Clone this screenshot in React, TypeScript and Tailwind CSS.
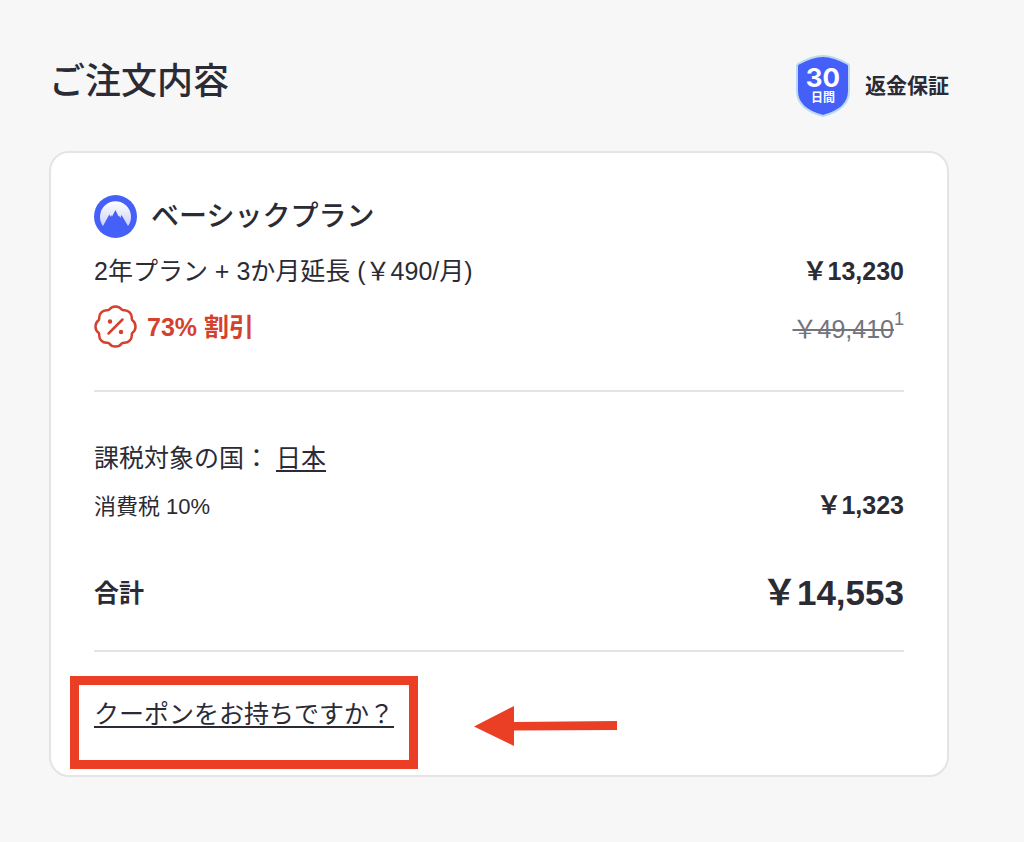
function ShieldBadge() {
  return (
    <div className="relative flex h-16 w-14 flex-col items-center text-white">
      <svg viewBox="0 0 56 64" className="absolute inset-0 h-full w-full" aria-hidden="true">
        <path
          d="M28 2 C35 2 44 5 53 10 Q54 11 54 12 V37 C54 50 43 58 28 62 C13 58 2 50 2 37 V12 Q2 11 3 10 C12 5 21 2 28 2 Z"
          fill="#4560f8"
          stroke="#bdd9f0"
          strokeWidth="2"
        />
      </svg>
      <span className="relative mt-3 font-['Inter',sans-serif] text-[26px] leading-6 font-bold">30</span>
      <span className="relative text-xs leading-4 font-bold">日間</span>
    </div>
  );
}

function MountainLogo() {
  return (
    <svg viewBox="0 0 43 43" className="h-[43px] w-[43px] shrink-0" aria-hidden="true">
      <defs>
        <linearGradient id="snow" x1="0" y1="0" x2="0" y2="1">
          <stop offset="0" stopColor="#ffffff" />
          <stop offset="1" stopColor="#cbd2f8" />
        </linearGradient>
      </defs>
      <circle cx="21.5" cy="21.5" r="21.5" fill="#4560f8" />
      <path
        d="M9 31 A15.500 15.500 0 1 1 34 31 L27.500 20 L26.300 23 L25 20.500 L24.500 21.500 L21.500 15 L18 21.500 L17 20 L16.500 22 L15.300 19.500 Z"
        fill="url(#snow)"
      />
    </svg>
  );
}

function DiscountIcon() {
  return (
    <svg
      viewBox="0 0 43 43"
      className="h-[43px] w-[43px] shrink-0"
      fill="none"
      stroke="#d3422e"
      strokeWidth="2.500"
      strokeLinecap="round"
      strokeLinejoin="round"
      aria-hidden="true"
    >
      <path d="M15 4.800 A8 8 0 0 1 28 4.800 Q29 5.400 30.500 5.200 A7.300 7.300 0 0 1 37.800 12.500 Q37.600 14 38.200 15 A8 8 0 0 1 38.200 28 Q37.600 29 37.800 30.500 A7.300 7.300 0 0 1 30.500 37.800 Q29 37.600 28 38.200 A8 8 0 0 1 15 38.200 Q14 37.600 12.500 37.800 A7.300 7.300 0 0 1 5.200 30.500 Q5.400 29 4.800 28 A8 8 0 0 1 4.800 15 Q5.400 14 5.200 12.500 A7.300 7.300 0 0 1 12.500 5.200 Q14 5.400 15 4.800 Z" />
      <path d="M14.500 28.500 L28.500 14.500" />
      <circle cx="16" cy="16.500" r="2.200" fill="#d3422e" stroke="none" />
      <circle cx="27" cy="27" r="2.200" fill="#d3422e" stroke="none" />
    </svg>
  );
}

export default function App() {
  return (
    <main className="min-h-screen bg-[#f7f7f7] pt-[54px] pr-[75px] pb-16 pl-[49px] font-['Liberation_Sans','Noto_Sans_CJK_JP',sans-serif] text-[25px] leading-9 text-[#2b2b35]">
      <header className="flex items-start justify-between">
        <h1 className="text-[36px] leading-[56px] font-medium">ご注文内容</h1>
        <div className="flex items-center gap-[14px]">
          <ShieldBadge />
          <span className="text-[21px] font-bold">返金保証</span>
        </div>
      </header>

      <section className="mt-[33px] rounded-[20px] border-2 border-[#e4e4e6] bg-white px-[43px] pt-[42px] pb-[43px]">
        {/* Plan */}
        <div className="flex items-center gap-[14px]">
          <MountainLogo />
          <h2 className="text-[28px] font-medium">ベーシックプラン</h2>
        </div>
        <div className="mt-[15px] flex items-center justify-between">
          <span>2年プラン + 3か月延長 (￥490/月)</span>
          <span className="font-bold">￥13,230</span>
        </div>
        <div className="mt-4 flex items-center justify-between">
          <div className="flex items-center gap-[10px] font-bold text-[#d3422e]">
            <DiscountIcon />
            <span>73% 割引</span>
          </div>
          <div className="flex items-start pt-1 text-[#74747c]">
            <s>￥49,410</s>
            <sup className="top-0 text-[18px] leading-4">1</sup>
          </div>
        </div>

        <hr className="mt-[42px] border-t-2 border-[#e4e4e6]" />

        {/* Tax */}
        <p className="mt-12">
          課税対象の国：{" "}
          <a href="#country" className="underline underline-offset-3">日本</a>
        </p>
        <div className="mt-[11px] flex items-start justify-between">
          <span className="text-[22px] leading-10">消費税 10%</span>
          <span className="font-bold">￥1,323</span>
        </div>

        <div className="mt-[42px] flex items-center justify-between">
          <span className="font-bold">合計</span>
          <span className="text-[35px] leading-[48px] font-bold">￥14,553</span>
        </div>

        <hr className="mt-[33px] border-t-2 border-[#e4e4e6]" />

        {/* Coupon */}
        <div className="mt-11 flex">
          <div className="relative">
            <a href="#coupon" className="block underline underline-offset-3">クーポンをお持ちですか？</a>
            <div className="pointer-events-none absolute -top-5 -right-6 -bottom-[37px] -left-6 border-[9px] border-[#eb3f25]" />
            <svg
              viewBox="0 0 143 40"
              className="absolute top-[10px] left-[380px] h-10 w-[143px]"
              fill="#eb3f25"
              aria-hidden="true"
            >
              <path d="M0 20.500 L40 0 V16 L143 15 V24 L40 24.500 V40 Z" />
            </svg>
          </div>
        </div>
      </section>
    </main>
  );
}
